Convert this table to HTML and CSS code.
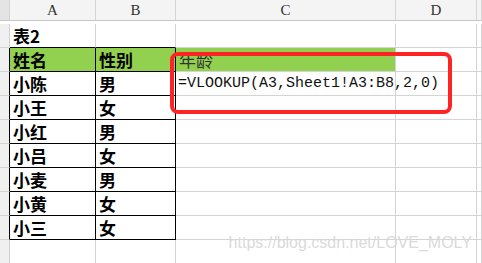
FILE: index.html
```html
<!DOCTYPE html>
<html>
    <head>
        <meta charset="utf-8">
        <title>VLOOKUP</title>
        <link rel="stylesheet" href="styles.css">
    </head>
    <body>
        <div class="sheet">
            <!-- 列标 -->
            <div class="corner"></div>
            <div class="colhead">A</div>
            <div class="colhead">B</div>
            <div class="colhead">C</div>
            <div class="colhead">D</div>
            <div class="colhead"></div>
            <!-- 第1行 -->
            <div class="rowhead"></div>
            <div class="cell top-edge">表2</div>
            <div class="cell top-edge"></div>
            <div class="cell"></div>
            <div class="cell"></div>
            <div class="cell"></div>
            <!-- 第2行 表头 -->
            <div class="rowhead boxed"></div>
            <div class="cell box green">姓名</div>
            <div class="cell box green">性别</div>
            <div class="cell green light">年龄</div>
            <div class="cell"></div>
            <div class="cell"></div>
            <!-- 第3行 -->
            <div class="rowhead boxed"></div>
            <div class="cell box">小陈</div>
            <div class="cell box">男</div>
            <div class="cell formula">=VLOOKUP(A3,Sheet1!A3:B8,2,0)</div>
            <div class="cell"></div>
            <div class="cell"></div>
        </div>
        <div class="sheet" id="rest"></div>
        <div class="mark">https://blog.csdn.net/LOVE_MOLY</div>
        <div class="highlight"></div>
        <script>
            // 剩余数据行
            const rows=[['小王','女'],['小红','男'],['小吕','女'],['小麦','男'],['小黄','女'],['小三','女'],['','']];
            let html='';
            rows.forEach(function(r,i){
                const b=i<rows.length-1?' box':'';
                html+='<div class="rowhead'+(b?' boxed':'')+'"></div>'
                    +'<div class="cell'+b+'">'+r[0]+'</div>'
                    +'<div class="cell'+b+'">'+r[1]+'</div>'
                    +'<div class="cell"></div><div class="cell"></div><div class="cell"></div>';
            });
            document.getElementById('rest').innerHTML=html;
        </script>
    </body>
</html>
```
FILE: styles.css
```css
*{
    margin: 0;
    padding: 0;
    box-sizing: border-box;
}
body{
    width: 482px;
    height: 263px;
    overflow: hidden;
    background: #fff;
    position: relative;
    font-family: "Noto Sans CJK SC", sans-serif;
}
.sheet{
    display: grid;
    grid-template-columns: 10px 86px 80px 220px 81px 1fr;
    grid-auto-rows: 24px;
}
.corner,.colhead{
    height: 21px;
    border-right: 1px solid #d4d4d4;
    border-bottom: 1px solid #c6c6c6;
    background: #f4f4f4;
}
.corner{
    background: #e4e4e4;
}
.colhead{
    text-align: center;
    font-family: "Liberation Serif", serif;
    font-size: 15px;
    line-height: 21px;
    color: #333;
}
.rowhead{
    background: #f0f0f0;
    border-right: 1px solid #d0d0d0;
    border-bottom: 1px solid #d4d4d4;
}
.rowhead.boxed{
    border-right-color: #000;
}
.cell{
    border-right: 1px solid #d4d4d4;
    border-bottom: 1px solid #d4d4d4;
    padding: 0 0 0 3px;
    font-size: 17px;
    font-weight: 700;
    line-height: 24px;
    color: #000;
    white-space: nowrap;
}
.top-edge{
    border-bottom-color: #000;
}
.box{
    border-right-color: #000;
    border-bottom-color: #000;
}
.green{
    background: #92d050;
}
.light{
    font-weight: 400;
    color: #333;
}
.formula{
    font-family: "Liberation Mono", monospace;
    font-size: 15px;
    font-weight: 400;
    color: #111;
    padding-left: 2px;
}
.mark{
    position: absolute;
    right: 10px;
    top: 234px;
    font-family: "Liberation Sans", sans-serif;
    font-size: 16px;
    white-space: nowrap;
    color: #dadada;
}
.highlight{
    position: absolute;
    left: 170px;
    top: 52px;
    width: 282px;
    height: 62px;
    border: 4px solid #ff2424;
    border-radius: 8px;
}
```
